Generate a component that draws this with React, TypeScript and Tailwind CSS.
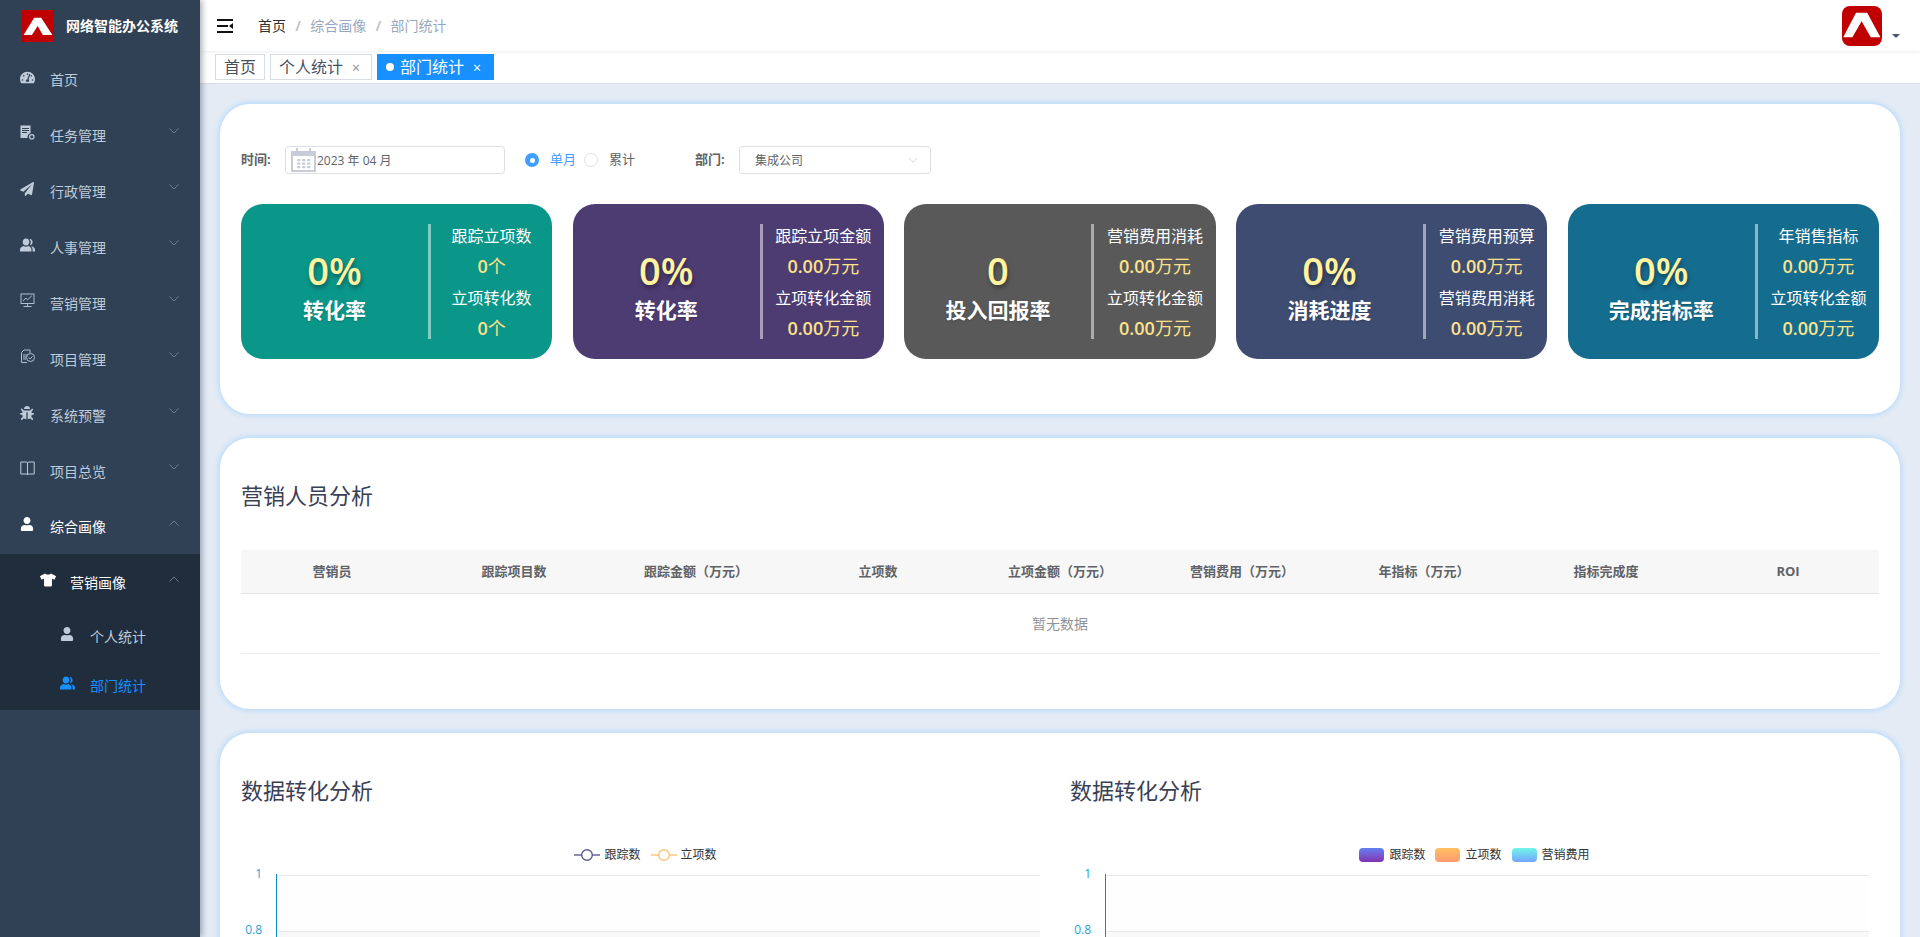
import { FaTachometerAlt, FaPaperPlane, FaBug, FaUser, FaTshirt } from "react-icons/fa";
import { ChevronDown } from "lucide-react";
import type { ReactNode } from "react";

const Logo = ({ rounded }: { rounded?: boolean }) => (
  <svg viewBox="0 0 100 100" className="w-full h-full block">
    <rect width="100" height="100" rx={rounded ? 20 : 0} fill="#c00000" />
    <polygon points={rounded ? "3,78 35,17 63,17 96,78 72,78 49,38 26,78" : "5,78 38,24 60,24 95,78 65,78 49,50 31,78"} fill="#fff" />
  </svg>
);

const Chevron = ({ up }: { up?: boolean }) => (
  <svg viewBox="0 0 10 6" className="w-[10px] h-[6px] mb-[8px] ml-auto mr-[21px]" fill="none" stroke="#76838f" strokeWidth="0.9">
    <path d={up ? "M0.5 5.5 L5 1 L9.5 5.5" : "M0.5 0.5 L5 5 L9.5 0.5"} />
  </svg>
);

const TaskIcon = () => (
  <svg viewBox="0 0 15 15" className="w-[15px] h-[15px]" fill="#bfcbd9">
    <path d="M0.5 0.5 h10 v7.8 a3.6 3.6 0 0 0 -2.8 4.7 H0.5 z" />
    <rect x="2" y="3" width="7" height="1" fill="#304156" />
    <rect x="2" y="5" width="7" height="1" fill="#304156" />
    <rect x="2" y="7" width="5" height="1" fill="#304156" />
    <circle cx="11.8" cy="11.8" r="2.2" fill="none" stroke="#bfcbd9" strokeWidth="1.2" />
  </svg>
);

const FileCheck = () => (
  <svg viewBox="0 0 15 15" className="w-[15px] h-[15px]" fill="none" stroke="#bfcbd9" strokeWidth="0.9">
    <path d="M7 13.5 H1.5 V3.5 L4 1 H10 V4" />
    <path d="M3 6 H7 M3 8 H6 M3 10 H6" />
    <circle cx="10.5" cy="8.5" r="4" />
    <path d="M8.7 8.5 L10.2 10 L12.4 7.4" />
  </svg>
);

const BookIcon = () => (
  <svg viewBox="0 0 15 15" className="w-[15px] h-[15px]" fill="none" stroke="#bfcbd9" strokeWidth="1">
    <path d="M0.8 1 H6 C7 1 7.5 1.5 7.5 2 C7.5 1.5 8 1 9 1 H14.2 V13 H9 C8 13 7.5 13.5 7.5 14 C7.5 13.5 7 13 6 13 H0.8 Z M7.5 2 V14" />
  </svg>
);

const BoardIcon = () => (
  <svg viewBox="0 0 15 15" className="w-[15px] h-[15px]" fill="none" stroke="#bfcbd9" strokeWidth="0.9">
    <rect x="1" y="1" width="13" height="9.5" />
    <path d="M3 8 L5.8 5 L7.6 6.8 L11.8 2.8" />
    <path d="M7.5 10.5 V13 M3.5 13.5 H11.5" />
  </svg>
);

const PeopleIcon = () => (
  <svg viewBox="0 0 15 14" className="w-[15px] h-[14px]" fill="currentColor">
    <path d="M9.3 4 C9.3 6 8 7.6 6 7.6 C4 7.6 2.7 6 2.7 4 C2.7 1.8 4 0.4 6 0.4 C8 0.4 9.3 1.8 9.3 4 Z" />
    <path d="M0 13.5 V11.6 C0 9.6 2 8.4 3.8 7.9 C5 9 7 9 8.2 7.9 C10 8.4 11.4 9.6 11.4 11.6 V13.5 Z" />
    <path d="M9.4 0.9 C11.2 0.7 12.6 2 12.6 4 C12.6 5.7 11.6 7 10 7.3 C10.5 6.4 10.8 5.2 10.8 4 C10.8 2.8 10.3 1.7 9.4 0.9 Z" />
    <path d="M10.9 7.9 C12.8 8.4 15 9.5 15 11.4 V13.5 H12.6 V11.4 C12.6 10 11.9 8.8 10.9 7.9 Z" />
  </svg>
);

const menuItems: { label: string; icon: ReactNode }[] = [
  { label: "任务管理", icon: <TaskIcon /> },
  { label: "行政管理", icon: <FaPaperPlane size={14} /> },
  { label: "人事管理", icon: <PeopleIcon /> },
  { label: "营销管理", icon: <BoardIcon /> },
  { label: "项目管理", icon: <FileCheck /> },
  { label: "系统预警", icon: <FaBug size={14} /> },
  { label: "项目总览", icon: <BookIcon /> },
];

function Sidebar() {
  return (
    <aside className="w-[200px] shrink-0 h-full bg-[#304156] text-[14px] text-[#bfcbd9] shadow-[2px_0_6px_rgba(0,21,41,0.35)] relative z-10">
      <div className="h-[51px] flex items-center pl-[22px]">
        <div className="w-[32px] h-[32px]"><Logo /></div>
        <span className="ml-[12px] text-white font-bold whitespace-nowrap text-[14px]">网络智能办公系统</span>
      </div>
      <div className="h-[56px] flex items-center pl-[20px]">
        <span className="w-[30px] mb-[3px]"><FaTachometerAlt size={15} /></span>
        <span>首页</span>
      </div>
      {menuItems.map((m) => (
        <div key={m.label} className="h-[56px] flex items-center pl-[20px]">
          <span className="w-[30px] mb-[5px]">{m.icon}</span>
          <span>{m.label}</span>
          <Chevron />
        </div>
      ))}
      <div className="h-[55px] flex items-center pl-[20px] text-white">
        <span className="w-[30px] mb-[5px]"><FaUser size={14} /></span>
        <span>综合画像</span>
        <Chevron up />
      </div>
      <div className="bg-[#1f2d3d]">
        <div className="h-[57px] flex items-center pl-[40px] text-white">
          <span className="w-[30px] mb-[5px]"><FaTshirt size={16} /></span>
          <span>营销画像</span>
          <Chevron up />
        </div>
        <div className="h-[50px] flex items-center pl-[60px]">
          <span className="w-[30px] mb-[5px]"><FaUser size={14} /></span>
          <span>个人统计</span>
        </div>
        <div className="h-[49px] flex items-center pl-[60px] text-[#1890ff]">
          <span className="w-[30px] mb-[5px]"><PeopleIcon /></span>
          <span>部门统计</span>
        </div>
      </div>
    </aside>
  );
}

function Header() {
  return (
    <header className="h-[51px] shrink-0 bg-white flex items-center shadow-[0_1px_3px_rgba(0,21,41,0.08)] relative z-[1]">
      <svg viewBox="0 0 16 14" className="w-[16px] h-[14px] ml-[17px]" fill="#111">
        <rect y="0" width="16" height="2" />
        <rect y="6" width="11" height="2" />
        <rect y="12" width="16" height="2" />
        <polygon points="16,4 16,10 12,7" />
      </svg>
      <nav className="ml-[25px] flex items-center text-[14px] text-[#97a8be]">
        <span className="text-[#303133]">首页</span>
        <span className="mx-[9.25px] text-[#c0c4cc] font-bold">/</span>
        <span>综合画像</span>
        <span className="mx-[9.25px] text-[#c0c4cc] font-bold">/</span>
        <span>部门统计</span>
      </nav>
      <div className="ml-auto w-[40px] h-[40px] mr-[10px]"><Logo rounded /></div>
      <div className="w-0 h-0 mr-[20px] mt-[20px] border-x-[4px] border-x-transparent border-t-[4px] border-t-[#4a5568]" />
    </header>
  );
}

function Tags() {
  return (
    <div className="h-[33px] shrink-0 bg-white border-b border-[#d8dce5] flex items-start pt-[3px] pl-[15px] gap-[5px] text-[16px] text-[#495060]">
      <div className="h-[26px] w-[50px] border border-[#d8dce5] flex items-center justify-center">首页</div>
      <div className="h-[26px] w-[102px] border border-[#d8dce5] flex items-center pl-[8px]">
        <span>个人统计</span>
        <span className="ml-[9px] text-[14px] text-[#8a8f99]">×</span>
      </div>
      <div className="h-[26px] w-[117px] bg-[#1890ff] text-white flex items-center pl-[9px]">
        <span className="w-[8px] h-[8px] rounded-full bg-white mr-[6px]" />
        <span>部门统计</span>
        <span className="ml-[9px] text-[14px]">×</span>
      </div>
    </div>
  );
}

type Kpi = { bg: string; big: string; title: string; a: string; av: string; b: string; bv: string };
const kpis: Kpi[] = [
  { bg: "bg-[#0b968a]", big: "0%", title: "转化率", a: "跟踪立项数", av: "0|个", b: "立项转化数", bv: "0|个" },
  { bg: "bg-[#4d3c72]", big: "0%", title: "转化率", a: "跟踪立项金额", av: "0.00|万元", b: "立项转化金额", bv: "0.00|万元" },
  { bg: "bg-[#595959]", big: "0", title: "投入回报率", a: "营销费用消耗", av: "0.00|万元", b: "立项转化金额", bv: "0.00|万元" },
  { bg: "bg-[#3e4c71]", big: "0%", title: "消耗进度", a: "营销费用预算", av: "0.00|万元", b: "营销费用消耗", bv: "0.00|万元" },
  { bg: "bg-[#146c8f]", big: "0%", title: "完成指标率", a: "年销售指标", av: "0.00|万元", b: "立项转化金额", bv: "0.00|万元" },
];

const Val = ({ v }: { v: string }) => {
  const [num, unit] = v.split("|");
  return (
    <div className="text-[18px] text-[#fde28a]">
      <span className="font-semibold">{num}</span>
      <span>{unit}</span>
    </div>
  );
};

function KpiCard({ k }: { k: Kpi }) {
  return (
    <div className={`${k.bg} h-[155px] rounded-[22px] flex items-center text-white`}>
      <div className="w-[187px] pt-[8px] flex flex-col items-center">
        <div className="text-[38px] leading-[46px] font-semibold text-[#fff3a0] [text-shadow:1px_3px_4px_rgba(0,0,0,0.35)]">{k.big}</div>
        <div className="text-[21px] leading-[28px] mt-[3px] font-bold [text-shadow:0_1px_2px_rgba(0,0,0,0.2)]">{k.title}</div>
      </div>
      <div className="w-[3px] h-[115px] bg-white/50" />
      <div className="flex-1 flex flex-col items-center text-[16px] leading-[30px] whitespace-nowrap">
        <div>{k.a}</div>
        <Val v={k.av} />
        <div className="mt-[2px]">{k.b}</div>
        <Val v={k.bv} />
      </div>
    </div>
  );
}

const Card = ({ children, className = "" }: { children: ReactNode; className?: string }) => (
  <section className={`bg-white rounded-[30px] px-[21px] shrink-0 shadow-[0_0_5px_2px_#bcdcfa] ${className}`}>{children}</section>
);

function FilterRow() {
  return (
    <div className="h-[28px] flex items-center text-[13px] text-[#606266]">
      <span className="font-bold w-[44px]">时间:</span>
      <div className="w-[220px] h-[28px] border border-[#dcdfe6] rounded-[4px] flex items-center pl-[5px] text-[12px]">
        <svg viewBox="0 0 25 24" className="w-[25px] h-[24px] shrink-0" fill="#c8ccd8">
          <path d="M0 3 H5 V0 H7 V3 H18 V0 H20 V3 H25 V24 H0 Z M2 8 V22 H23 V8 Z" />
          <g>
            {[6, 11, 16].map((x) => [11, 14.5, 18].map((y) => <rect key={`${x}-${y}`} x={x} y={y} width="3.4" height="2.2" rx="0.8" />))}
          </g>
        </svg>
        <span className="ml-[1px] pt-[1px]">2023 年 04 月</span>
      </div>
      <span className="ml-[20px] w-[14px] h-[14px] rounded-full bg-[#409eff] flex items-center justify-center">
        <span className="w-[5px] h-[5px] rounded-full bg-white" />
      </span>
      <span className="ml-[11px] text-[#409eff]">单月</span>
      <span className="ml-[8px] w-[14px] h-[14px] rounded-full border border-[#dcdfe6]" />
      <span className="ml-[11px]">累计</span>
      <span className="ml-[60px] font-bold w-[44px]">部门:</span>
      <div className="w-[192px] h-[28px] border border-[#dcdfe6] rounded-[4px] flex items-center pl-[15px] pr-[9px] text-[12px]">
        <span className="pt-[1px]">集成公司</span>
        <ChevronDown size={16} strokeWidth={1} className="ml-auto text-[#c0c4cc]" />
      </div>
    </div>
  );
}

const cols = ["营销员", "跟踪项目数", "跟踪金额（万元）", "立项数", "立项金额（万元）", "营销费用（万元）", "年指标（万元）", "指标完成度", "ROI"];

function PeopleTable() {
  return (
    <div>
      <div className="h-[44px] bg-[#f7f7f7] border-b border-[#e4e4e4] grid grid-cols-9 items-center text-[13px] font-bold text-[#606266]">
        {cols.map((c) => <div key={c} className="text-center">{c}</div>)}
      </div>
      <div className="h-[60px] border-b border-[#ebeef5] flex items-center justify-center text-[14px] text-[#909399]">暂无数据</div>
    </div>
  );
}

const ChartPlot = () => (
  <svg viewBox="0 0 809 72" className="w-[809px] h-[72px] block">
    <rect x="35" y="10" width="764" height="56" fill="#fefefe" />
    <rect x="35" y="66" width="764" height="6" fill="#f8f8f8" />
    <line x1="35" y1="10.5" x2="799" y2="10.5" stroke="#e8e8e8" />
    <line x1="35" y1="66.5" x2="799" y2="66.5" stroke="#e8e8e8" />
    <line x1="35.5" y1="9" x2="35.5" y2="72" stroke="#0a8bc7" />
    <text x="21" y="12.5" fontSize="12" fill="#2a9fd6" textAnchor="end">1</text>
    <text x="21" y="69" fontSize="12" fill="#2a9fd6" textAnchor="end">0.8</text>
  </svg>
);

const LineKey = ({ color, label }: { color: string; label: string }) => (
  <span className="flex items-center gap-[4px]">
    <svg viewBox="0 0 26 14" className="w-[26px] h-[14px]" fill="#fff" stroke={color} strokeWidth="1.4">
      <line x1="0" y1="7" x2="26" y2="7" />
      <circle cx="13" cy="7" r="5.3" />
    </svg>
    {label}
  </span>
);

const BarKey = ({ gradient, label }: { gradient: string; label: string }) => (
  <span className="flex items-center gap-[5px]">
    <span className={`w-[25px] h-[14px] rounded-[4px] bg-gradient-to-b ${gradient}`} />
    {label}
  </span>
);

function ChartBlock({ legend }: { legend: ReactNode }) {
  return (
    <div>
      <h3 className="h-[36px] leading-[32px] text-[22px] font-normal text-[#3a4055]">数据转化分析</h3>
      <div className="mt-[35px] h-[20px] w-[809px] flex items-center justify-center gap-[10px] text-[12px] text-[#333]">{legend}</div>
      <ChartPlot />
    </div>
  );
}

export default function App() {
  return (
    <div className="w-[1920px] h-[937px] overflow-hidden flex [font-family:'Open_Sans','Noto_Sans_CJK_SC',sans-serif]">
      <Sidebar />
      <div className="flex-1 min-w-0 h-full flex flex-col bg-[#e4ebf5]">
        <Header />
        <Tags />
        <main className="flex-1 min-h-0 overflow-hidden pt-[20px] px-[20px] flex flex-col gap-[24px]">
          <Card className="h-[310px] pt-[42px]">
            <FilterRow />
            <div className="mt-[30px] grid grid-cols-5 gap-[20.5px]">
              {kpis.map((k, i) => <KpiCard key={i} k={k} />)}
            </div>
          </Card>
          <Card className="h-[271px] pt-[41px]">
            <h3 className="h-[36px] leading-[32px] text-[22px] font-normal text-[#3a4055]">营销人员分析</h3>
            <div className="mt-[35px]"><PeopleTable /></div>
          </Card>
          <Card className="h-[400px] pt-[41px]">
            <div className="grid grid-cols-2 gap-[20px]">
              <ChartBlock legend={<><LineKey color="#5e5a92" label="跟踪数" /><LineKey color="#ffc477" label="立项数" /></>} />
              <ChartBlock legend={<>
                <BarKey gradient="from-[#5f7ff0] to-[#7f30b0]" label="跟踪数" />
                <BarKey gradient="from-[#ffc060] to-[#ff9a70]" label="立项数" />
                <BarKey gradient="from-[#6ff5e5] to-[#74a4ff]" label="营销费用" />
              </>} />
            </div>
          </Card>
        </main>
      </div>
    </div>
  );
}
